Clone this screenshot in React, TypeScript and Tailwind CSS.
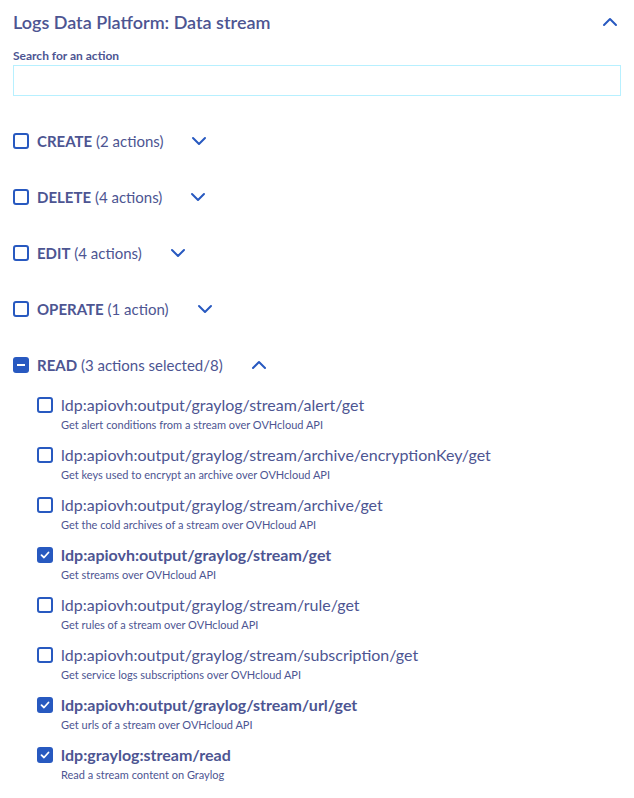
import React from "react";

const font = { fontFamily: '"Source Sans Pro", Lato, "Liberation Sans", sans-serif' };

function Box({ state }: { state: "off" | "on" | "mixed" }) {
  if (state === "off") {
    return <span className="block w-4 h-4 shrink-0 rounded-[3px] border-2 border-[#2859c0] bg-white" />;
  }
  return (
    <span className="flex w-4 h-4 shrink-0 items-center justify-center rounded-[3px] bg-[#2859c0]">
      {state === "on" ? (
        <svg width="10" height="10" viewBox="0 0 10 10" fill="none">
          <path d="M1.5 5.2 L4 7.5 L8.5 2.5" stroke="white" strokeWidth="1.8" strokeLinecap="round" strokeLinejoin="round" />
        </svg>
      ) : (
        <span className="block w-2 h-[2px] bg-white" />
      )}
    </span>
  );
}

function Chevron({ up }: { up?: boolean }) {
  return (
    <svg width="16" height="10" viewBox="0 0 16 10" fill="none">
      <path
        d={up ? "M2 8 L8 2 L14 8" : "M2 2 L8 8 L14 2"}
        stroke="#2859c0"
        strokeWidth="2"
        strokeLinecap="round"
        strokeLinejoin="round"
      />
    </svg>
  );
}

const groups = [
  { name: "CREATE", count: "(2 actions)" },
  { name: "DELETE", count: "(4 actions)" },
  { name: "EDIT", count: "(4 actions)" },
  { name: "OPERATE", count: "(1 action)" },
];

const actions = [
  { id: "ldp:apiovh:output/graylog/stream/alert/get", desc: "Get alert conditions from a stream over OVHcloud API", on: false },
  { id: "ldp:apiovh:output/graylog/stream/archive/encryptionKey/get", desc: "Get keys used to encrypt an archive over OVHcloud API", on: false },
  { id: "ldp:apiovh:output/graylog/stream/archive/get", desc: "Get the cold archives of a stream over OVHcloud API", on: false },
  { id: "ldp:apiovh:output/graylog/stream/get", desc: "Get streams over OVHcloud API", on: true },
  { id: "ldp:apiovh:output/graylog/stream/rule/get", desc: "Get rules of a stream over OVHcloud API", on: false },
  { id: "ldp:apiovh:output/graylog/stream/subscription/get", desc: "Get service logs subscriptions over OVHcloud API", on: false },
  { id: "ldp:apiovh:output/graylog/stream/url/get", desc: "Get urls of a stream over OVHcloud API", on: true },
  { id: "ldp:graylog:stream/read", desc: "Read a stream content on Graylog", on: true },
];

export default function App() {
  return (
    <div className="min-h-screen bg-white text-[#4d5592] px-[13px]" style={font}>
      <div className="flex items-center justify-between h-[44px]">
        <h2 className="text-[18px] font-semibold leading-none">Logs Data Platform: Data stream</h2>
        <span className="mr-[3px]">
          <Chevron up />
        </span>
      </div>

      <label className="block mt-[5px] text-[12px] font-bold leading-[14px]">Search for an action</label>
      <input className="block w-full h-[31px] mt-[2px] border border-[#b7f0ff] outline-none" />

      <div className="mt-[37px] flex flex-col gap-[40px]">
        {groups.map((g) => (
          <div key={g.name} className="flex items-center h-4">
            <Box state="off" />
            <span className="ml-2 text-[15px]">
              <b className="font-bold">{g.name}</b> {g.count}
            </span>
            <span className="ml-[28px]">
              <Chevron />
            </span>
          </div>
        ))}
        <div>
          <div className="flex items-center h-4">
            <Box state="mixed" />
            <span className="ml-2 text-[15px]">
              <b className="font-bold">READ</b> (3 actions selected/8)
            </span>
            <span className="ml-[28px]">
              <Chevron up />
            </span>
          </div>
          <ul className="mt-[22px] pl-6 flex flex-col gap-[11px]">
            {actions.map((a) => (
              <li key={a.id} className="flex items-start">
                <span className="mt-[2px]">
                  <Box state={a.on ? "on" : "off"} />
                </span>
                <div className="ml-2">
                  <div className={"text-[16px] leading-[20px] " + (a.on ? "font-bold" : "")}>{a.id}</div>
                  <div className="text-[11px] leading-[19px]">{a.desc}</div>
                </div>
              </li>
            ))}
          </ul>
        </div>
      </div>
    </div>
  );
}
